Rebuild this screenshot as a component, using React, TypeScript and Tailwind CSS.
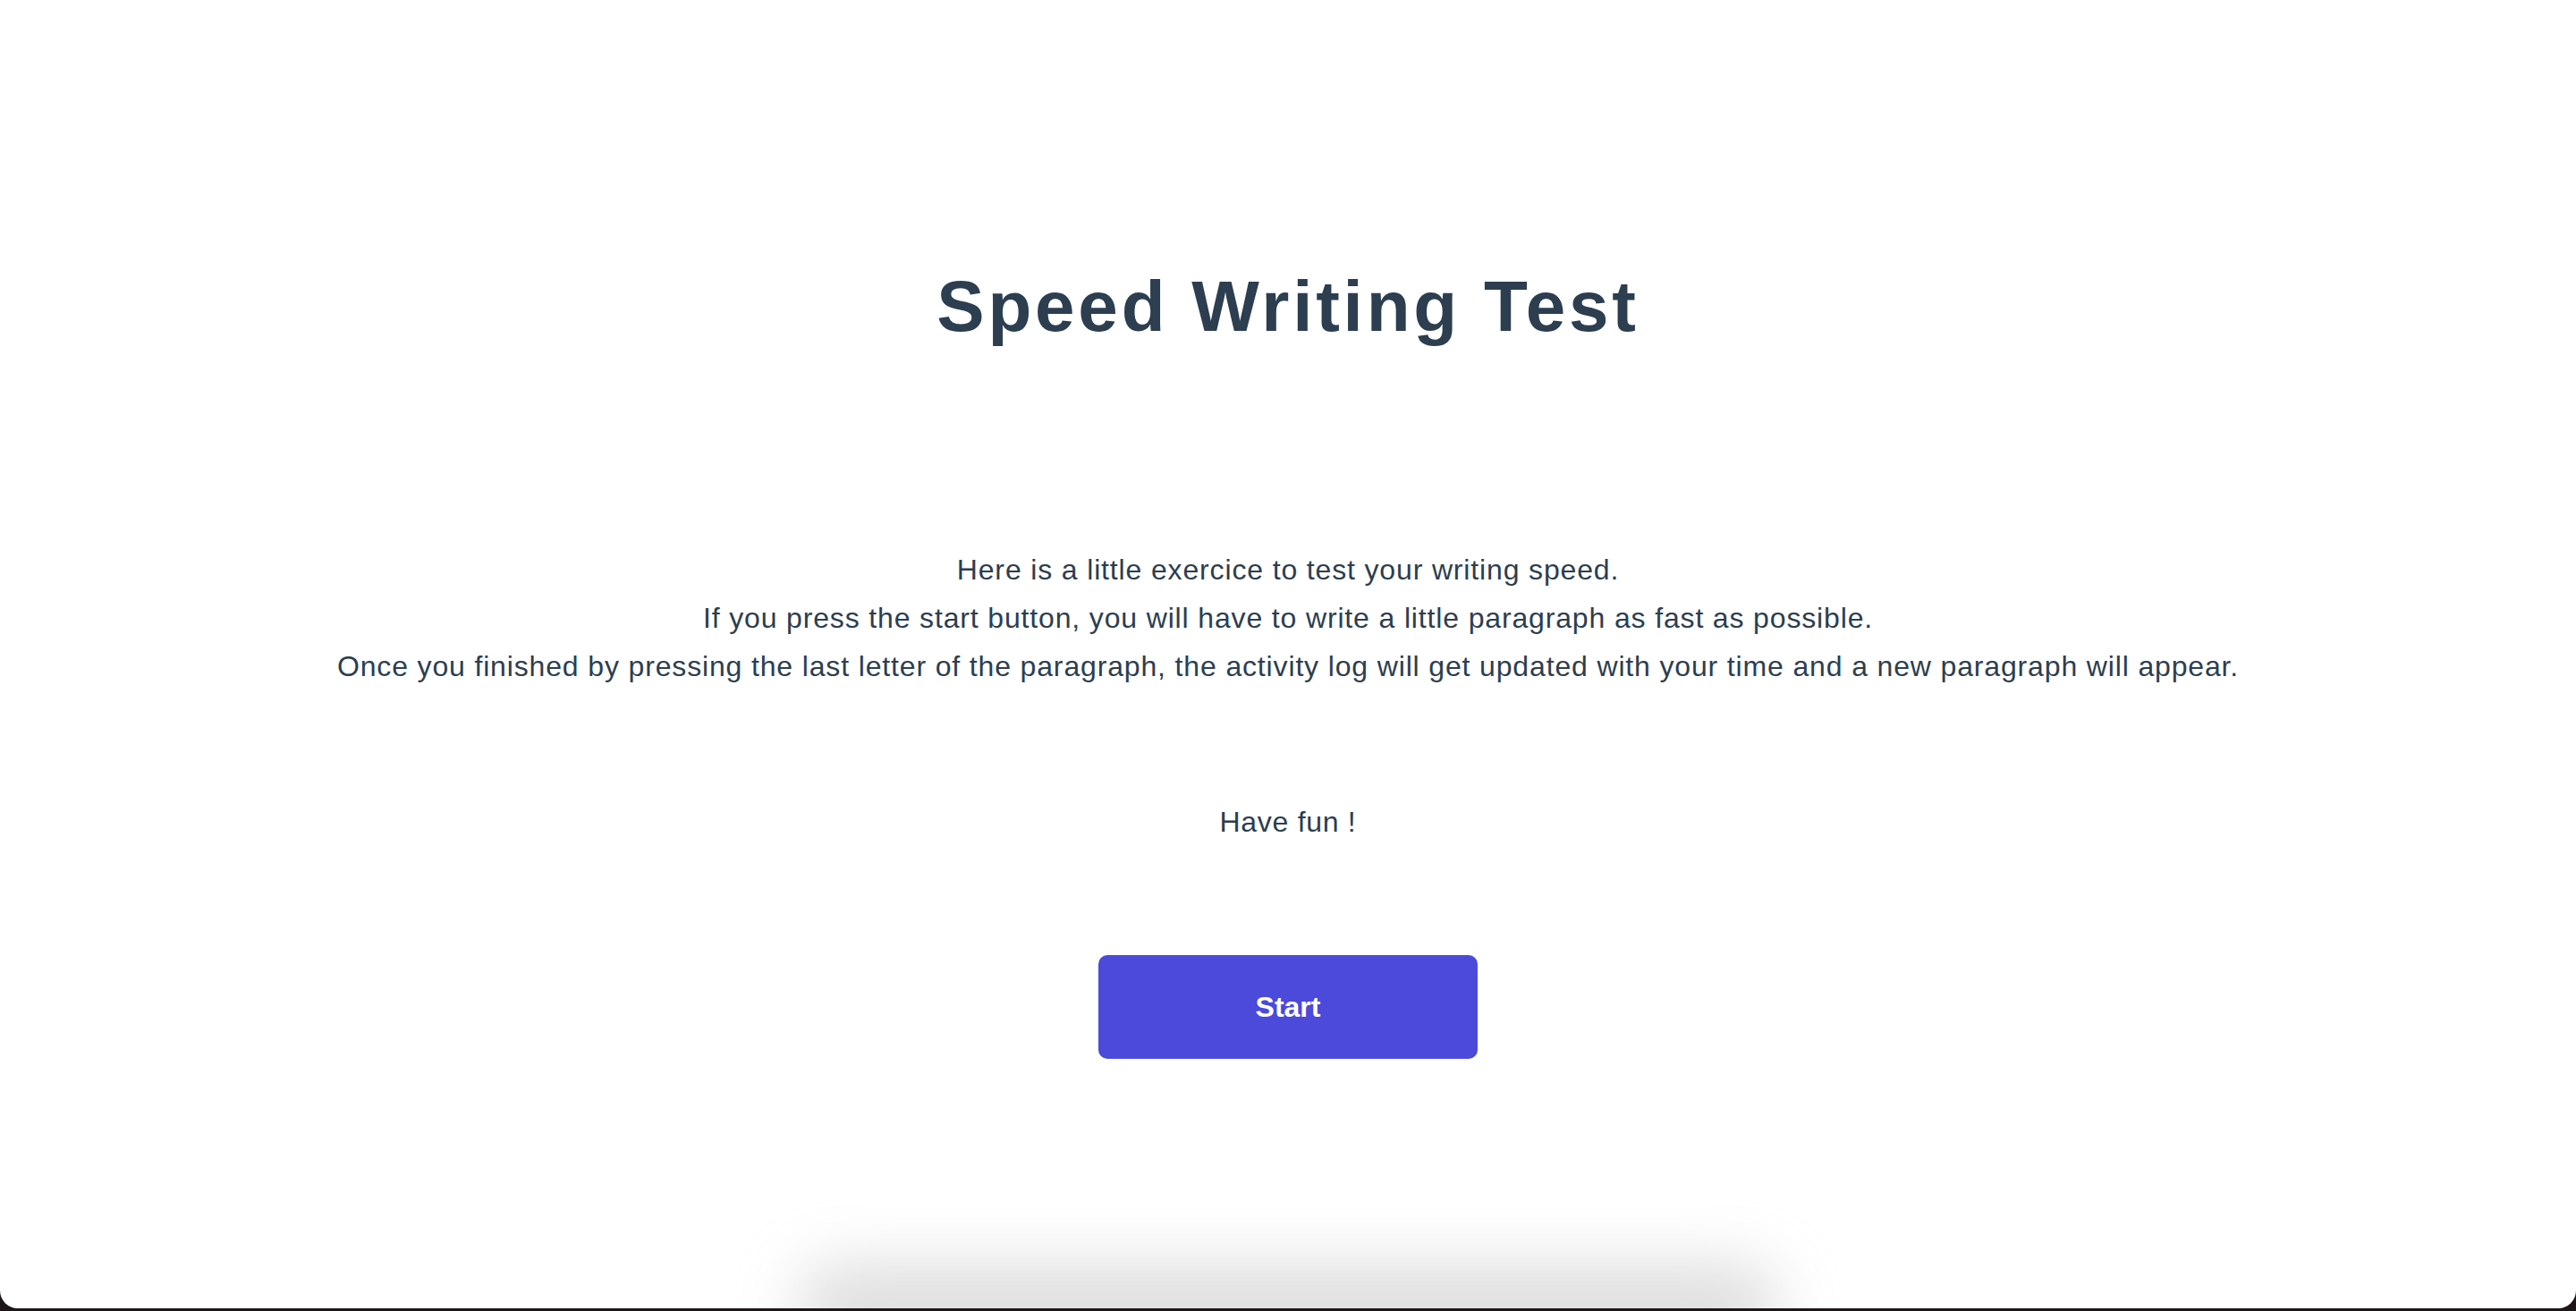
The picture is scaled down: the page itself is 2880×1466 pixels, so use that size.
import React from "react";

export default function App() {
  return (
    <div className="w-full h-[1466px] bg-[#1d1618] overflow-hidden">
      <div
        className="relative w-full h-[1463px] bg-white rounded-b-[20px] overflow-hidden text-[#2c3e50] text-center"
        style={{ fontFamily: '"Liberation Sans", Arial, Helvetica, sans-serif' }}
      >
        <h1 className="pt-[303px] text-[80px] leading-[80px] font-bold tracking-[3.8px]">
          Speed Writing Test
        </h1>
        <div className="mt-[227px] text-[32px] leading-[54px] tracking-[0.85px]">
          <p>Here is a little exercice to test your writing speed.</p>
          <p>If you press the start button, you will have to write a little paragraph as fast as possible.</p>
          <p>
            Once you finished by pressing the last letter of the paragraph, the activity log will get updated with
            your time and a new paragraph will appear.
          </p>
        </div>
        <p className="mt-[120px] text-[32px] leading-[54px] tracking-[0.7px]">Have fun !</p>
        <div className="mt-[122px] flex justify-center">
          <button className="w-[424px] h-[116px] rounded-[10px] bg-[#4b4adb] text-white text-[32px] font-bold">
            Start
          </button>
        </div>
        <div className="absolute left-1/2 -translate-x-1/2 bottom-[-50px] w-[1100px] h-[100px] rounded-full bg-[#c8c8c8] blur-[34px] opacity-60" />
      </div>
    </div>
  );
}
